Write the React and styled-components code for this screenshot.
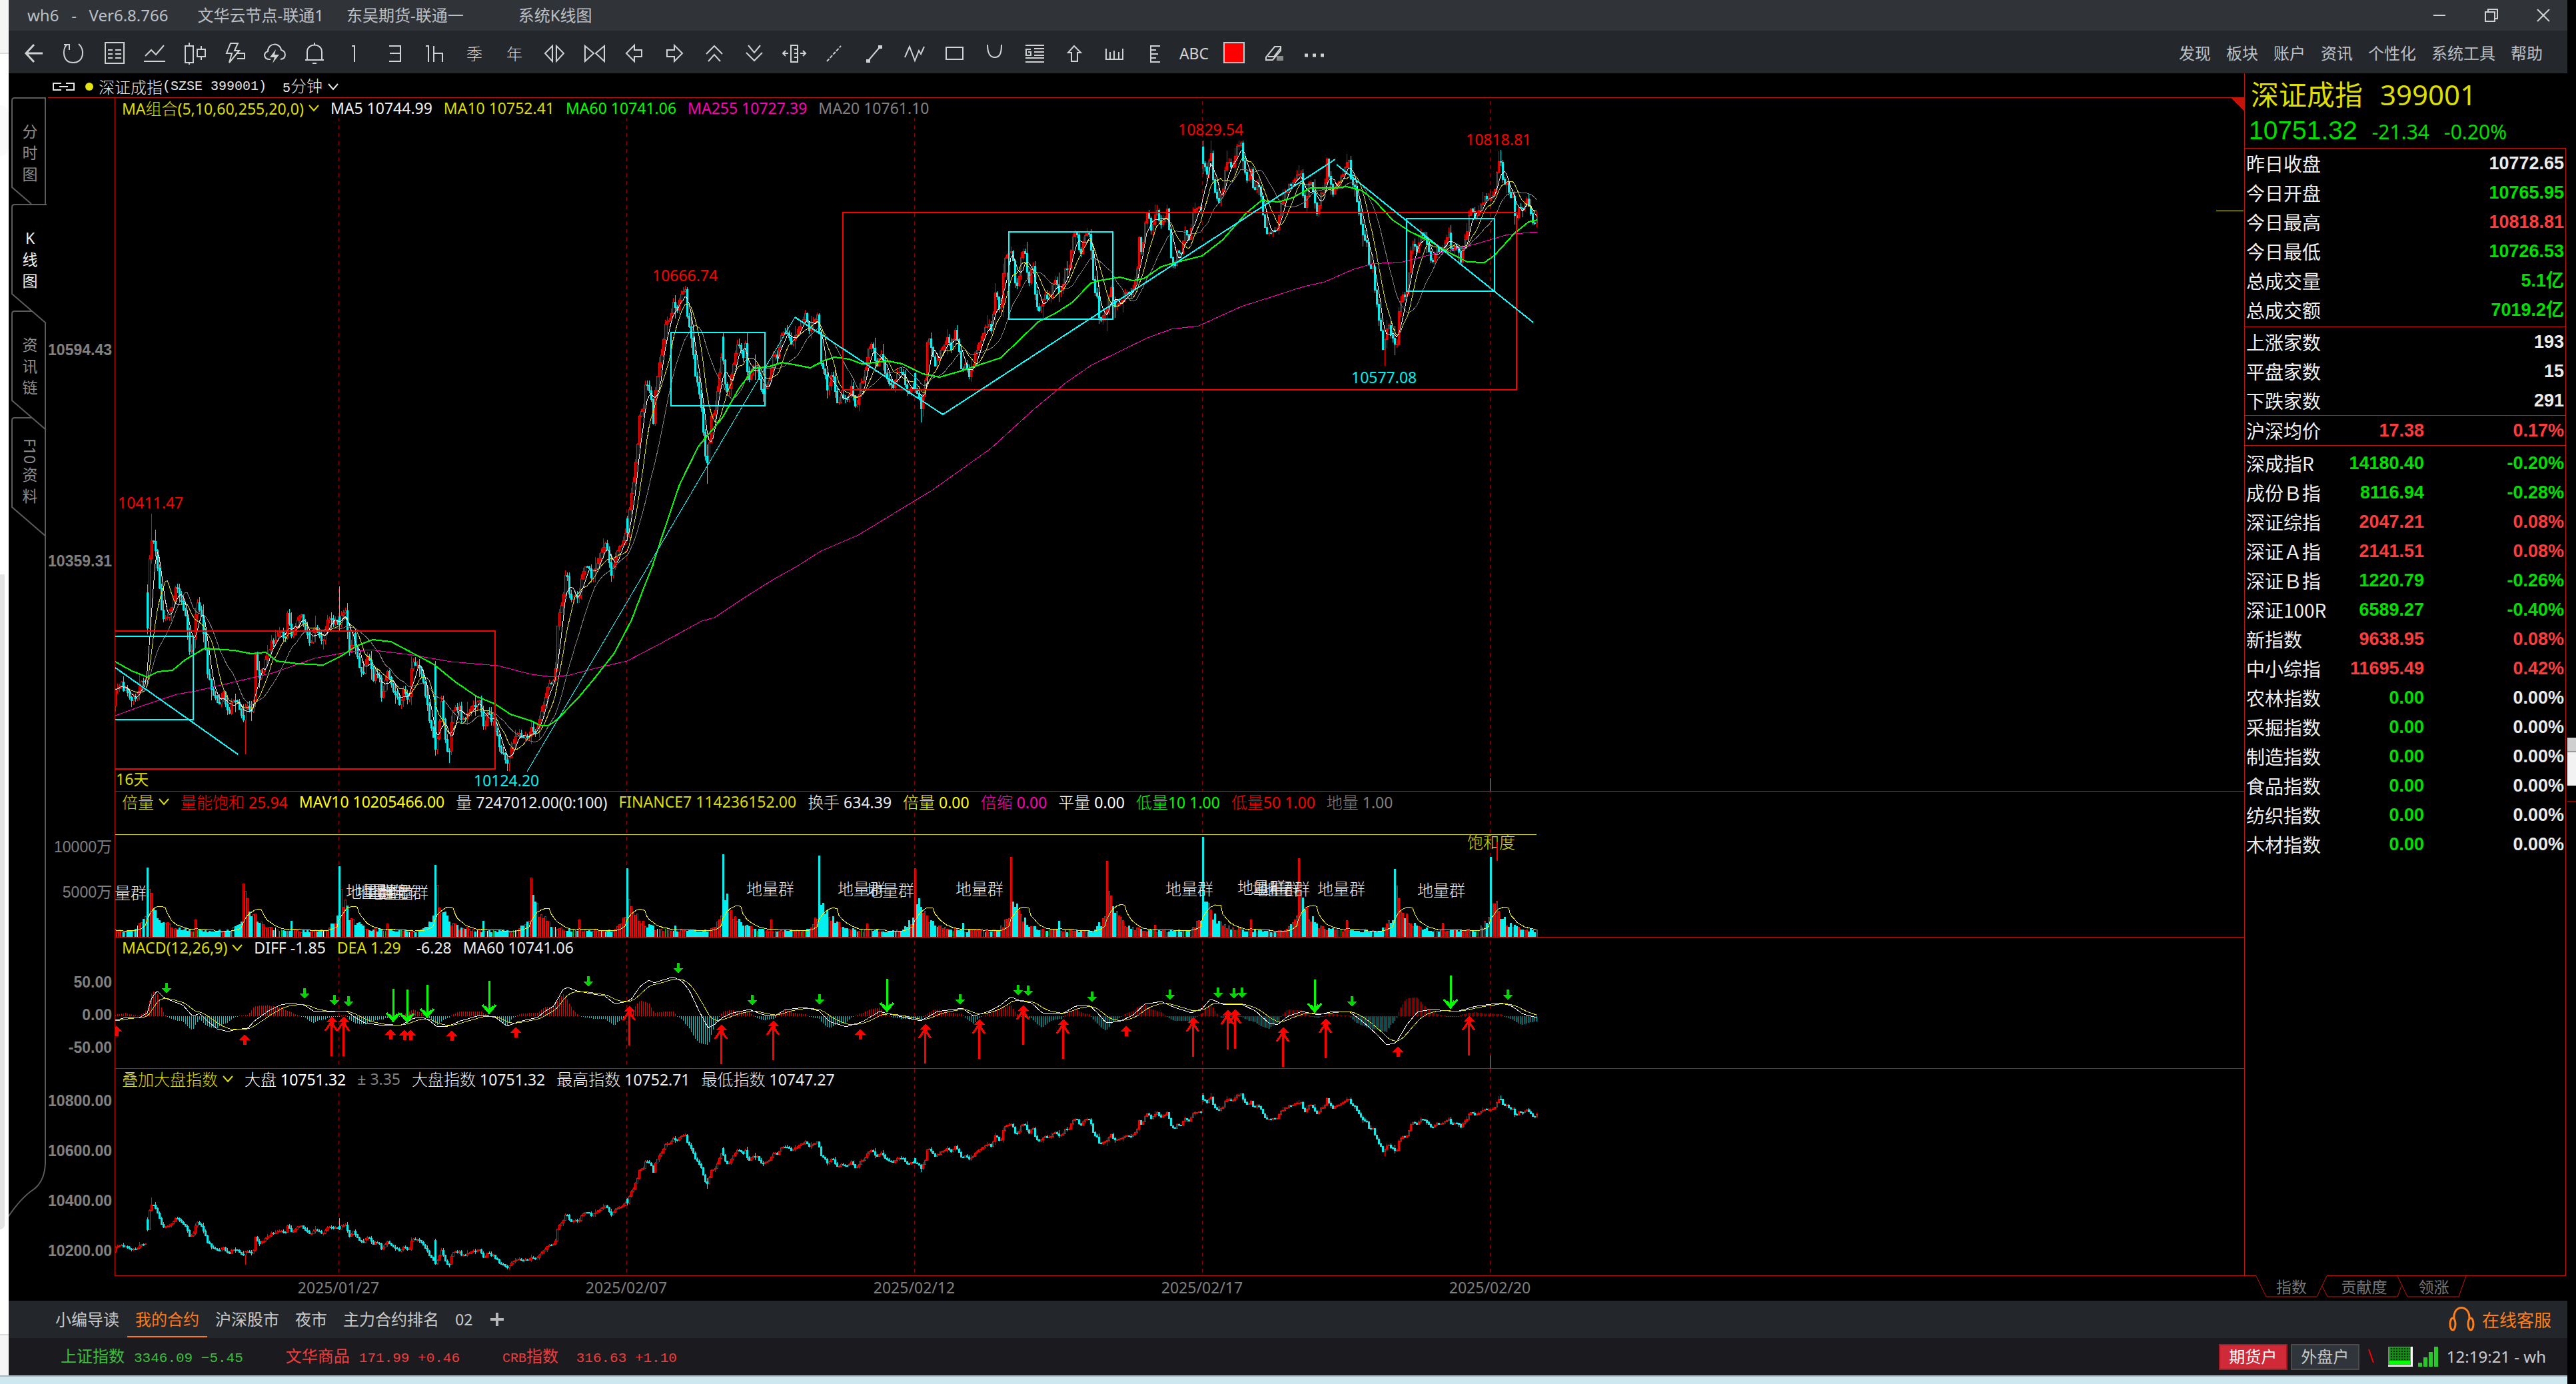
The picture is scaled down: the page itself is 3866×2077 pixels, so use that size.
import React from "react";
import styled, { createGlobalStyle } from "styled-components";

const RED = "#c4140a";
const GREEN = "#00e000";
const CYAN = "#00f0f0";
const YELLOW = "#dede00";
const SANS = '"Noto Sans", "Noto Sans CJK SC", sans-serif';

const Global = createGlobalStyle`
  * { box-sizing: border-box; }
  body { margin: 0; background: #000; font-family: ${SANS}; font-size: 23px; line-height: 32px; color: #e8e8e8; overflow: hidden; }
  button { font: inherit; color: inherit; background: none; border: 0; padding: 0; margin: 0; white-space: nowrap; }
  a { color: inherit; text-decoration: none; }
`;

/* ---------- shell ---------- */
const Desktop = styled.div`
  display: grid;
  grid-template-columns: 13px minmax(0, 1fr) 13px;
  grid-template-rows: minmax(0, 1fr) 13px;
  height: 100vh;
`;
const LeftEdge = styled.div`
  display: flex;
  flex-direction: column;
  background: #fff;
`;
const EdgeBlock = styled.div`
  flex: ${(p) => p.$grow} 1 0;
  width: ${(p) => p.$w || "100%"};
  background: ${(p) => p.$bg || "transparent"};
  border-radius: ${(p) => p.$r || 0};
  border-bottom: ${(p) => (p.$line ? `2px solid ${p.$line}` : 0)};
`;
const RightEdge = styled.div`
  grid-column: 3;
  grid-row: 1 / 3;
  display: flex;
  flex-direction: column;
  background: #000;
`;
const Taskbar = styled.div`
  grid-column: 1 / 3;
  background: #cfe7ee;
  border-top: 2px solid #a9b8bc;
`;
const Window = styled.div`
  display: grid;
  grid-template-rows: 46px 64px minmax(0, 1fr) 56px 56px;
  min-width: 0;
`;
const TitleBar = styled.header`
  display: flex;
  align-items: center;
  justify-content: space-between;
  background: #303338;
  color: #bcc0c5;
  padding: 0 24px 0 28px;
`;
const Titles = styled.div`
  display: flex;
  white-space: pre;
  font-size: 24px;
`;
const Title = styled.span`
  margin-right: ${(p) => p.$gap}px;
`;
const WindowButtons = styled.div`
  display: flex;
  gap: 54px;
`;
const IconButton = styled.button`
  display: grid;
  place-items: center;
  width: ${(p) => p.$w || 24}px;
  height: 46px;
  color: ${(p) => p.$color || "#d2d2d2"};
`;
const Line = styled.svg`
  display: block;
  fill: none;
  stroke: currentColor;
  stroke-width: 2;
  overflow: visible;
`;
const Toolbar = styled.nav`
  display: flex;
  align-items: center;
  justify-content: space-between;
  background: #24272b;
  padding: 4px 37px 0 9px;
`;
const Tools = styled.div`
  display: flex;
`;
const Menu = styled.div`
  display: flex;
  gap: 23px;
  font-size: 24px;
  color: #bcc0c5;
`;

/* ---------- chart side ---------- */
const Main = styled.main`
  display: flex;
  min-height: 0;
`;
const ChartSide = styled.section`
  flex: 1 1 0;
  min-width: 0;
  display: flex;
  flex-direction: column;
`;
const Symbol = styled.div`
  display: flex;
  align-items: center;
  height: 36px;
  padding: 4px 0 0 66px;
  font-size: 24px;
  font-family: "Noto Sans CJK SC", sans-serif;
  font-weight: 300;
  white-space: pre;
`;
const Mono = styled.span`
  font-family: "Liberation Mono", monospace;
  font-size: ${(p) => p.$size || 20}px;
`;
const Dot = styled.span`
  width: 12px;
  height: 12px;
  border-radius: 50%;
  background: #e4e410;
  margin: 0 8px 0 16px;
`;
const Period = styled.button`
  display: flex;
  align-items: center;
  gap: 8px;
  margin-left: 24px;
`;
const Body = styled.div`
  flex: 1;
  display: flex;
  min-height: 0;
`;
const ViewTabs = styled.div`
  width: 59px;
  display: flex;
  flex-direction: column;
`;
const ViewTab = styled.button`
  display: grid;
  height: 160px;
  color: ${(p) => (p.$active ? "#f0f0f0" : "#8c8c8c")};
`;
const TabShape = styled.svg`
  grid-area: 1 / 1;
  display: block;
  fill: none;
  stroke: ${(p) => p.$color || "#5c5c5c"};
  stroke-width: ${(p) => p.$sw || 2};
  overflow: visible;
`;
const ViewLabel = styled.span`
  grid-area: 1 / 1;
  display: flex;
  flex-direction: column;
  align-items: center;
  justify-content: center;
  padding: 6px 0 0 5px;
`;
const Turned = styled.span`
  writing-mode: vertical-rl;
  line-height: 24px;
`;
const TabRest = styled.div`
  flex: 1;
  min-height: 0;
  overflow: hidden;
`;
const Panels = styled.div`
  flex: 1;
  min-width: 0;
  display: flex;
  flex-direction: column;
`;
const Panel = styled.div`
  flex: ${(p) => p.$grow} 1 0;
  min-height: 0;
  display: grid;
  grid-template-columns: 100px minmax(0, 1fr);
`;
const Axis = styled.svg`
  display: block;
  width: 100%;
  height: 100%;
  border-top: ${(p) => (p.$ruled ? `1px solid ${RED}` : "1px solid #000")};
  font-family: "Liberation Sans", "Noto Sans CJK SC", sans-serif;
  font-weight: ${(p) => (p.$thin ? 400 : 700)};
  font-size: 23px;
  fill: #808080;
  text-anchor: end;
`;
const Plot = styled.div`
  display: grid;
  grid-template: minmax(0, 1fr) / minmax(0, 1fr);
  border-top: 1px solid ${RED};
  border-left: 1px solid ${RED};
`;
const Canvas = styled.svg`
  grid-area: 1 / 1;
  display: block;
  width: 100%;
  height: 100%;
  overflow: hidden;
  shape-rendering: crispEdges;
`;
const Legend = styled.div`
  grid-area: 1 / 1;
  justify-self: start;
  align-self: start;
  z-index: 1;
  display: flex;
  gap: 17px;
  height: 30px;
  line-height: 30px;
  padding-left: 10px;
  background: #000;
  white-space: pre;
`;
const LegendItem = styled.span`
  color: ${(p) => p.$c};
`;
const Han = styled.span`
  font-family: "Noto Sans CJK SC", sans-serif;
  font-size: 24px;
  font-weight: 300;
  line-height: 30px;
`;
const LegendName = styled.button`
  display: flex;
  align-items: center;
  gap: 7px;
  color: ${YELLOW};
`;
const Dates = styled.svg`
  display: block;
  width: 100%;
  height: 37px;
  fill: #808080;
  text-anchor: middle;
`;
const DateRow = styled.div`
  margin-left: 100px;
  border-top: 1px solid ${RED};
  height: 38px;
`;

/* ---------- quote side ---------- */
const Quote = styled.aside`
  width: 485px;
  padding-right: 2px;
  display: flex;
  flex-direction: column;
`;
const QuoteBox = styled.div`
  flex: 1;
  border: solid ${RED};
  border-width: 0 1px;
`;
const QuoteHead = styled.div`
  height: 112px;
  margin-right: -3px;
  background: #000;
`;
const QuoteName = styled.h1`
  margin: 0;
  padding: 2px 0 0 9px;
  font-size: 42px;
  font-weight: 400;
  line-height: 60px;
  color: ${YELLOW};
  display: flex;
  gap: 26px;
`;
const QuotePrice = styled.div`
  display: flex;
  align-items: baseline;
  gap: 22px;
  padding: 2px 0 0 6px;
  font-size: 30px;
  line-height: 44px;
  color: ${GREEN};
`;
const Last = styled.span`
  font-family: "Liberation Sans", sans-serif;
  font-size: 39px;
`;
const Table = styled.table`
  width: 100%;
  table-layout: fixed;
  border-collapse: collapse;
`;
const Section = styled.div`
  border-top: 1px solid ${RED};
  padding: ${(p) => p.$pt || 0}px 2px ${(p) => p.$pb || 0}px;
`;
const Name = styled.th`
  width: ${(p) => (p.$wide ? "40%" : "25%")};
  height: 44px;
  padding: 0;
  text-align: left;
  font-weight: 400;
  font-size: 28px;
  line-height: 40px;
  font-family: "Noto Sans CJK SC", sans-serif;
  white-space: nowrap;
  overflow: visible;
  color: #eee;
`;
const Value = styled.td`
  width: ${(p) => p.$w || "auto"};
  padding: 0;
  text-align: right;
  font-family: "Liberation Sans", "Noto Sans CJK SC", sans-serif;
  font-weight: 700;
  font-size: 27px;
  color: ${(p) => p.$c};
`;
const QuoteTabs = styled.div`
  display: flex;
  height: 38px;
`;
const Ruled = styled.div`
  flex: ${(p) => (p.$fill ? "1" : "none")};
  width: 18px;
  border-top: 1px solid ${RED};
`;
const QuoteTab = styled.button`
  display: grid;
  grid-template: 34px / minmax(0, 1fr);
  width: ${(p) => p.$w}px;
  border-top: 1px solid ${(p) => (p.$open ? "#000" : RED)};
  color: #777;
`;
const QuoteTabLabel = styled.span`
  grid-area: 1 / 1;
  text-align: center;
`;

/* ---------- bottom bars ---------- */
const PageTabs = styled.nav`
  display: flex;
  justify-content: space-between;
  background: #23272b;
  padding: 0 24px 0 58px;
  font-family: "Noto Sans CJK SC", sans-serif;
  font-size: 24px;
`;
const Row = styled.div`
  display: flex;
  align-items: center;
`;
const PageTab = styled.button`
  height: 54px;
  padding: 0 12px;
  color: ${(p) => (p.$active ? "#ff7a1a" : "#c8c8c8")};
  border-bottom: 2px solid ${(p) => (p.$active ? "#ff7a1a" : "transparent")};
`;
const AddTab = styled.button`
  display: grid;
  place-items: center;
  width: 48px;
  height: 54px;
  color: #b8b8b8;
`;
const Service = styled.a`
  display: flex;
  align-items: center;
  gap: 12px;
  color: #ff7f1a;
  font-size: 26px;
`;
const StatusBar = styled.footer`
  display: flex;
  align-items: center;
  justify-content: space-between;
  background: #1a1a1f;
  padding: 0 32px 0 78px;
`;
const Indices = styled.div`
  display: flex;
  gap: 64px;
`;
const Index = styled.span`
  display: flex;
  align-items: baseline;
  gap: 14px;
  font-family: "Noto Sans CJK SC", sans-serif;
  font-size: 24px;
  color: ${(p) => (p.$up ? "#f03c3c" : "#3cbe3c")};
  white-space: pre;
`;
const Account = styled.button`
  width: 103px;
  height: 39px;
  margin-right: 5px;
  font-size: 24px;
  color: ${(p) => (p.$on ? "#fff" : "#c8c8c8")};
  background: ${(p) => (p.$on ? "#d02a38" : "#30353b")};
  border: 2px solid ${(p) => (p.$on ? "#9c1f24" : "#4b4b4b")};
  line-height: 32px;
`;
const Spinner = styled.svg`
  display: block;
  margin: 0 21px 0 8px;
`;
const Clock = styled.span`
  margin-left: 13px;
  color: #c8ccd0;
  font-size: 24px;
`;
const StatusIcons = styled.div`
  display: flex;
  gap: 8px;
`;

/* ---------- series ---------- */
const FIRST = 173;
const STEP = 3;
const COUNT = 712;

// Closing level along the time axis, as x, y pairs.
const CLOSE = [
  173,1033,182,1027,189,1037,198,1048,205,1043,211,1020,218,1017,221,943,224,840,228,800,233,830,238,867,242,917,248,930,256,913,264,880,272,900,279,930,284,977,289,973,295,900,302,927,307,967,311,1013,319,1037,329,1057,334,1037,342,1073,349,1047,358,1060,365,1083,370,1053,376,1077,380,1053,383,983,388,1020,393,1010,399,987,407,963,415,960,423,943,427,967,431,920,438,957,445,930,451,917,457,940,466,970,472,943,484,960,493,927,501,933,509,933,517,910,522,960,525,980,530,947,536,987,543,1017,552,983,560,1017,568,1010,573,1050,581,1007,590,1040,600,1057,605,1037,613,1053,618,993,627,997,635,1023,643,1073,653,1123,657,1103,662,1053,668,1107,673,1137,678,1070,688,1060,694,1083,705,1063,719,1050,726,1097,731,1070,740,1083,748,1113,756,1137,763,1147,767,1120,775,1097,784,1110,791,1107,798,1093,805,1097,814,1060,822,1027,828,1030,833,1000,837,920,844,907,849,847,855,903,862,887,868,900,874,857,881,847,887,863,893,857,901,827,910,817,918,867,924,830,933,813,941,797,948,730,951,717,955,677,960,613,964,623,969,570,976,593,980,633,984,570,989,547,994,520,999,483,1005,477,1011,447,1015,470,1021,443,1028,437,1032,487,1036,493,1039,527,1043,563,1048,580,1053,617,1058,687,1062,700,1066,627,1072,620,1079,563,1084,523,1088,580,1093,587,1098,557,1102,527,1110,513,1114,540,1118,517,1122,570,1130,550,1136,550,1141,583,1147,588,1154,570,1160,533,1166,533,1173,500,1181,503,1188,517,1196,500,1202,487,1209,463,1214,500,1221,480,1228,473,1231,540,1237,557,1242,593,1248,560,1252,577,1257,607,1263,590,1270,600,1277,580,1284,617,1290,580,1295,570,1301,537,1308,510,1316,553,1322,527,1330,570,1339,580,1346,560,1354,553,1362,593,1372,577,1377,590,1382,613,1387,583,1392,500,1397,523,1404,550,1410,530,1421,507,1428,523,1432,493,1438,517,1443,563,1448,550,1455,563,1464,530,1471,513,1482,483,1487,493,1494,433,1501,477,1506,393,1512,377,1519,383,1525,440,1532,387,1537,367,1543,430,1549,387,1554,457,1560,473,1566,443,1574,447,1583,420,1591,443,1598,407,1605,397,1610,353,1615,347,1621,383,1628,350,1633,343,1637,377,1641,430,1646,443,1650,483,1655,473,1661,467,1666,423,1671,457,1681,460,1689,433,1697,440,1705,413,1710,347,1713,387,1718,337,1722,310,1728,353,1734,313,1743,337,1752,313,1756,380,1762,403,1767,373,1772,383,1778,347,1785,360,1790,323,1795,310,1802,317,1805,243,1809,247,1812,263,1816,213,1820,267,1824,297,1829,303,1834,290,1837,257,1842,240,1850,253,1855,223,1862,213,1866,247,1872,280,1877,253,1882,293,1887,270,1892,290,1896,330,1902,353,1909,343,1917,343,1921,310,1928,293,1934,280,1942,267,1952,263,1957,313,1965,273,1970,283,1975,320,1982,293,1987,290,1990,230,1994,263,2000,287,2008,273,2016,257,2023,237,2028,273,2034,283,2039,323,2045,350,2052,370,2056,417,2059,387,2064,443,2069,477,2076,527,2082,483,2087,503,2092,503,2095,530,2099,470,2105,440,2112,443,2115,387,2121,360,2126,380,2133,343,2141,370,2148,397,2155,373,2161,377,2168,363,2174,347,2179,383,2184,363,2192,390,2198,363,2206,310,2212,327,2220,317,2228,293,2235,297,2242,293,2247,253,2251,230,2256,277,2261,273,2266,297,2271,293,2274,343,2280,303,2285,317,2291,297,2296,320,2302,340,2307,317,
];
const MA60 = [
  173,993,198,1007,221,1016,237,1008,259,1006,278,990,307,973,351,976,377,981,399,979,415,992,447,996,485,998,511,985,536,969,559,960,587,963,619,980,651,997,683,1023,715,1045,744,1057,766,1072,798,1082,811,1089,823,1089,836,1080,868,1047,893,1017,922,980,948,930,967,880,979,850,992,810,1020,727,1048,670,1084,627,1109,583,1132,553,1155,550,1173,544,1191,547,1216,552,1237,541,1252,536,1275,539,1293,546,1334,542,1354,546,1385,561,1410,566,1441,557,1471,547,1502,537,1530,510,1558,483,1584,470,1609,454,1637,425,1650,421,1681,416,1700,421,1717,418,1743,400,1768,393,1804,384,1835,360,1870,320,1893,301,1919,303,1939,297,1967,282,2003,282,2021,280,2044,286,2064,302,2090,330,2115,347,2146,362,2171,377,2202,393,2228,394,2243,383,2273,350,2294,333,2307,330,
];
const MA255 = [
  173,1074,217,1058,265,1042,294,1037,358,1022,409,1010,472,988,514,980,555,975,619,983,677,993,747,999,798,1012,830,1016,855,1013,893,1003,941,992,989,967,1053,932,1072,927,1117,897,1160,870,1196,850,1232,827,1288,803,1400,735,1487,673,1553,613,1600,574,1638,548,1722,507,1758,494,1799,489,1863,460,1957,430,1988,423,2029,405,2059,396,2105,393,2156,380,2212,367,2263,352,2307,348,
];
const DIFF = [
  173,1531,189,1527,210,1527,221,1520,228,1497,236,1487,246,1497,260,1503,274,1508,289,1525,300,1521,312,1533,326,1544,342,1548,354,1545,372,1543,382,1532,403,1517,421,1508,435,1506,456,1508,470,1517,488,1519,519,1517,533,1527,547,1535,575,1539,603,1538,621,1528,635,1527,645,1532,656,1541,673,1540,691,1532,723,1523,744,1527,761,1540,779,1533,807,1527,817,1518,831,1510,845,1485,852,1482,866,1487,891,1492,908,1495,922,1506,937,1504,947,1500,961,1480,974,1471,982,1475,1010,1466,1024,1473,1035,1487,1049,1517,1063,1543,1073,1537,1084,1527,1100,1520,1125,1515,1146,1523,1162,1525,1179,1515,1208,1512,1229,1517,1245,1533,1270,1541,1295,1533,1320,1518,1340,1523,1382,1532,1407,1518,1444,1513,1461,1525,1486,1517,1502,1508,1517,1496,1531,1502,1548,1505,1564,1520,1593,1522,1614,1510,1635,1509,1647,1520,1660,1535,1680,1533,1701,1523,1718,1507,1743,1503,1763,1512,1788,1520,1805,1513,1817,1499,1834,1507,1863,1507,1884,1517,1904,1535,1917,1538,1933,1525,1954,1518,1979,1523,2000,1518,2025,1518,2045,1533,2066,1552,2081,1568,2095,1565,2112,1537,2128,1518,2149,1515,2186,1518,2215,1510,2253,1505,2269,1510,2286,1522,2306,1527,
];

const noise = (n) => {
  const s = Math.sin(n * 127.1 + 11.7) * 43758.5453;
  return s - Math.floor(s);
};
const sample = (pairs) => {
  const out = [];
  let k = 0;
  for (let i = 0; i < COUNT; i++) {
    const x = FIRST + i * STEP;
    while (k < pairs.length - 4 && pairs[k + 2] < x) k += 2;
    const t = Math.min(1, Math.max(0, (x - pairs[k]) / (pairs[k + 2] - pairs[k])));
    out.push(pairs[k + 1] + (pairs[k + 3] - pairs[k + 1]) * t);
  }
  return out;
};
const polyline = (ys) => ys.map((y, i) => `${i ? "L" : "M"}${FIRST + i * STEP} ${y.toFixed(1)}`).join("");
const pairPath = (p) => {
  let d = "";
  for (let i = 0; i < p.length; i += 2) d += `${i ? "L" : "M"}${p[i]} ${p[i + 1]}`;
  return d;
};
const average = (ys, n) =>
  ys.map((_, i) => {
    const part = ys.slice(Math.max(0, i - n + 1), i + 1);
    return part.reduce((a, b) => a + b, 0) / part.length;
  });

const closes = sample(CLOSE).map((y, i) => Math.min(1152, Math.max(214, y + (noise(i) - 0.5) * 9)));
const OPENS = { 221: 889, 509: 925, 653: 1000, 941: 778, 1085: 505, 1373: 560, 1805: 220, 2237: 300 };
const HIGHS = { 227: 771, 509: 880, 1028: 429, 1817: 211, 2252: 225, 1085: 500 };
const LOWS = { 368: 1132, 764: 1157, 2078: 549, 1061: 726, 1661: 497, 1382: 634, 674: 1145 };
const candles = closes.map((close, i) => {
  const x = FIRST + i * STEP;
  const open = OPENS[x] || (i ? closes[i - 1] : close + 24);
  const top = Math.min(open, close);
  const bottom = Math.max(open, close);
  const reach = i % 4 === 0 ? 18 : 8;
  return {
    x,
    up: close < open,
    top,
    bottom,
    high: HIGHS[x] || Math.max(211, top - noise(i + 900) * reach),
    low: LOWS[x] || Math.min(1157, bottom + noise(i + 1900) * reach),
  };
});

const candlePaths = (map) => {
  let up = "";
  let down = "";
  let upWick = "";
  let downWick = "";
  candles.forEach((c) => {
    const top = Math.round(map(c.top));
    const h = Math.max(1, Math.round(map(c.bottom)) - top);
    const hi = Math.round(map(c.high));
    const lo = Math.round(map(c.low));
    if (c.up) {
      up += `M${c.x - 0.5} ${top + 0.5}h2v${h}h-2z`;
      upWick += `M${c.x + 0.5} ${hi}V${top}M${c.x + 0.5} ${top + h}V${lo}`;
    } else {
      down += `M${c.x - 1} ${top}h3v${h + 1}h-3z`;
      downWick += `M${c.x + 0.5} ${hi}V${lo}`;
    }
  });
  return { up, down, upWick, downWick };
};
const priceCandles = candlePaths((y) => y);
const marketCandles = candlePaths((y) => 1905 - (1157 - y) * 0.2796);

const OPENING_VOLUME = [104, 80, 106, 108, 89, 103, 124, 122, 103, 120, 114, 150, 118, 102, 120];
const RED_OPENINGS = [1, 4, 8, 9, 10, 12];
const volumes = closes.map((_, i) => {
  const bar = (i + 32) % 48;
  const day = Math.floor((i - 16) / 48);
  if (bar === 0) return OPENING_VOLUME[day];
  const decay = i < 16 ? 0 : 54 * Math.exp(-(bar - 1) / 5);
  const close = bar > 41 ? (bar - 41) * 3 : 0;
  const noon = bar % 24 === 0 ? 12 : 0;
  return Math.max(6, (9 + decay + close + noon) * (0.75 + noise(i + 77) * 0.5));
});
const volumeAverage = average(volumes, 10);
const bars = { cyan: "", red: "", green: "", white: "" };
volumes.forEach((v, i) => {
  const x = FIRST + i * STEP;
  const h = Math.round(v);
  const bar = (i + 32) % 48;
  const day = Math.floor((i - 16) / 48);
  const red = bar === 0 ? RED_OPENINGS.includes(day) : candles[i].up;
  const pick = noise(i + 5000);
  if (!red) bars.cyan += `M${x - 1} 1406h3v${-h}h-3z`;
  else if (h < 13 && pick > 0.8) bars.green += `M${x + 0.5} 1406v${-h}`;
  else if (h < 18 && pick < 0.1) bars.white += `M${x + 0.5} 1406v${-h}`;
  else bars.red += `M${x - 0.5} 1406v${-h}h2v${h}`;
});

const diff = sample(DIFF);
const dea = [];
diff.forEach((v, i) => dea.push(i ? dea[i - 1] + (v - dea[i - 1]) * 0.2 : v + 1));
const hist = { up: "", down: "" };
diff.forEach((v, i) => {
  const h = Math.round((v - dea[i]) * 2);
  hist[h < 0 ? "up" : "down"] += `M${FIRST + i * STEP + 0.5} 1525v${h || 1}`;
});

const DAYS = [508, 940, 1372, 1804, 2236];
const DATES = ["2025/01/27", "2025/02/07", "2025/02/12", "2025/02/17", "2025/02/20"];
const SMALL_DOWN = [[250,1491],[457,1499],[502,1509],[523,1511],[883,1481],[1018,1461],[1129,1509],[1230,1508],[1441,1508],[1528,1494],[1543,1495],[1639,1504],[1756,1501],[1828,1498],[1852,1499],[1864,1498],[2029,1511],[2263,1501]];
const BIG_DOWN = [[590,1535],[611,1536],[641,1529],[734,1523],[1331,1520],[1973,1521],[2177,1515]];
const SMALL_UP = [[175,1539],[367,1552],[586,1544],[607,1545],[616,1545],[678,1546],[774,1541],[1291,1544],[1690,1539],[2098,1570]];
const BIG_UP = [[498,1525],[516,1525],[945,1509],[1083,1537],[1161,1531],[1389,1536],[1470,1529],[1536,1508],[1596,1529],[1791,1526],[1843,1515],[1854,1514],[1926,1541],[1990,1528],[2205,1524]];
const GROUPS = [[148,1351],[519,1349],[534,1349],[552,1350],[571,1350],[1120,1345],[1257,1345],[1300,1347],[1434,1345],[1749,1345],[1857,1343],[1879,1345],[1894,1345],[1977,1345],[2127,1347]];

/* ---------- small parts ---------- */
const Chevron = () => (
  <Line width="16" height="12" viewBox="0 0 16 12"><path d="M1 2l7 8 7-8" /></Line>
);
// Chinese runs are set one size larger than the figures beside them.
const Mixed = ({ text }) =>
  text.split(/([\u4e00-\u9fff]+)/).map((run, i) => (i % 2 ? <Han key={i}>{run}</Han> : run));
const Grid = () => (
  <g stroke="#8c0000" strokeDasharray="6 6">
    {DAYS.map((x) => <path key={x} d={`M${x + 0.5} 140V1914`} />)}
  </g>
);
const Candles = ({ set }) => (
  <>
    <path d={set.upWick} stroke="#ff0000" fill="none" />
    <path d={set.downWick} stroke={CYAN} fill="none" />
    <path d={set.up} stroke="#ff0000" fill="#000" />
    <path d={set.down} fill={CYAN} />
  </>
);
const Indicator = ({ grow, top, ruled, thin, ticks, name, items, children }) => (
  <Panel $grow={grow}>
    <Axis $ruled={ruled} $thin={thin}>
      {ticks.map(([label, y]) => <text key={label} x="96" y={y - top - 1}>{label}</text>)}
    </Axis>
    <Plot>
      <Canvas><g transform={`translate(-173 ${-top - 1})`}>{children}</g></Canvas>
      <Legend>
        <LegendName><span><Mixed text={name} /></span><Chevron /></LegendName>
        {items.map(([text, color]) => <LegendItem key={text} $c={color}><Mixed text={text} /></LegendItem>)}
      </Legend>
    </Plot>
  </Panel>
);

const TOOLS = [
  ["返回", <path d="M30 18H6M17 5L5 18l12 13" strokeWidth="3" />],
  ["刷新", <path d="M8 5c-7 8-6 27 10 27S36 12 26 4M4 5h8v8" transform="translate(-2 0)" />],
  ["报价", <path d="M4 2h28v31H4zM8 13h7m4 0h9M8 19h7m4 0h9M8 25h7m4 0h9" />],
  ["分时", <path d="M4 22l9-9 7 7L32 6M2 30h32" />],
  ["K线", <path d="M4 7h12v25H4zM10 2v5m0 25v3M22 12h12v11H22zM28 7v5m0 11v5" />],
  ["闪电", <path d="M12 3h11l-5 11h7L10 32l4-14H6zM20 18h13v8H22" />],
  ["云", <><path d="M12 27C2 28 0 17 8 15 8 2 26 1 28 13c8 2 8 13-1 14" /><path d="M20 12l-9 12h7l-3 9 10-13h-7z" fill="currentColor" stroke="none" /></>],
  ["预警", <path d="M7 28V16C7 2 29 2 29 16v12M4 28h28M15 33h6M18 2v3" />],
  ["1分钟", <path d="M14 7h4v24" />],
  ["3分钟", <path d="M10 7h17v23H10M11 18h16" />],
  ["1小时", <path d="M5 7h4v24M17 7v24M17 18h13v13" />],
  ["季", null, "季"],
  ["年", null, "年"],
  ["拉开", <path d="M15 7L4 18l11 12zM21 7l11 11-11 12z" />],
  ["压缩", <path d="M4 7l13 11L4 30zM33 7L20 18l13 12z" />],
  ["左移", <path d="M18 6L6 18l12 12v-7h11V13H18z" />],
  ["右移", <path d="M18 6l12 12-12 12v-7H7V13h11z" />],
  ["放大", <path d="M6 19L18 7l12 12M9 30l9-10 9 10" />],
  ["缩小", <path d="M6 17l12 12 12-12M9 6l9 11 9-11" />],
  ["区间", <path d="M13 6h10v25H13zM23 12h-5m5 6h-5m5 6h-5M9 18H1m4-4l-4 4 4 4M27 18h8m-4-4l4 4-4 4" />],
  ["直线", <path d="M7 30L28 7" strokeDasharray="5 2" />],
  ["线段", <><path d="M9 29L27 8" /><path d="M6 27h6v5H6zM24 6h6v5h-6z" fill="currentColor" stroke="none" /></>],
  ["折线", <path d="M4 24l7-16 8 21 6-15 3 5 5-11" />],
  ["矩形", <path d="M6 9h25v18H6z" />],
  ["弧线", <path d="M8 5c0 12 3 19 11 19S29 17 29 5" />],
  ["黄金分割", <path d="M5 6h28M18 11h15M18 16h15M18 21h15M5 25h28M5 31h28M13 12H6v9h7v-5H9" />],
  ["箭头", <path d="M18 7l-9 10h5v13h9V17h5z" />],
  ["周期线", <path d="M6 11v16h25V11M12 16v11M18 14v13M25 16v11" />],
  ["百分比", <path d="M27 7H13v24h14M13 13h8M13 19h11M13 25h8" />],
  ["文字", null, "ABC"],
  ["颜色", <path d="M3 2h30v30H3z" fill="#ff0000" stroke="#c8c8c8" />],
  ["橡皮", <><path d="M6 24L19 8h9v6L16 28H6zM9 23h9L28 10" /><path d="M22 22h10v7H22z" fill="#888" stroke="none" /></>],
  ["更多", <path d="M4 18h5m7 0h5m7 0h5" strokeWidth="5" transform="translate(0 3)" />],
];
const MENU = ["发现", "板块", "账户", "资讯", "个性化", "系统工具", "帮助"];

const W = "#ececec";
const R = "#ff3c3c";
const G = GREEN;
const SUMMARY = [
  ["昨日收盘", "10772.65", W], ["今日开盘", "10765.95", G], ["今日最高", "10818.81", R],
  ["今日最低", "10726.53", G], ["总成交量", "5.1亿", G], ["总成交额", "7019.2亿", G],
];
const BREADTH = [["上涨家数", "193", W], ["平盘家数", "15", W], ["下跌家数", "291", W]];
const AVERAGE = [["沪深均价", "17.38", "0.17%", R, R]];
const INDEXES = [
  ["深成指R", "14180.40", "-0.20%", G, G], ["成份Ｂ指", "8116.94", "-0.28%", G, G],
  ["深证综指", "2047.21", "0.08%", R, R], ["深证Ａ指", "2141.51", "0.08%", R, R],
  ["深证Ｂ指", "1220.79", "-0.26%", G, G], ["深证100R", "6589.27", "-0.40%", G, G],
  ["新指数", "9638.95", "0.08%", R, R], ["中小综指", "11695.49", "0.42%", R, R],
  ["农林指数", "0.00", "0.00%", G, W], ["采掘指数", "0.00", "0.00%", G, W],
  ["制造指数", "0.00", "0.00%", G, W], ["食品指数", "0.00", "0.00%", G, W],
  ["纺织指数", "0.00", "0.00%", G, W], ["木材指数", "0.00", "0.00%", G, W],
];
const PairTable = ({ rows }) => (
  <Table><tbody>
    {rows.map(([n, v, c]) => <tr key={n}><Name scope="row" $wide>{n}</Name><Value $c={c}>{v}</Value></tr>)}
  </tbody></Table>
);
const IndexTable = ({ rows }) => (
  <Table><tbody>
    {rows.map(([n, v, p, c, pc]) => (
      <tr key={n}><Name scope="row">{n}</Name><Value $w="31%" $c={c}>{v}</Value><Value $c={pc}>{p}</Value></tr>
    ))}
  </tbody></Table>
);

export default function App() {
  return (
    <>
      <Global />
      <Desktop>
        <LeftEdge>
          <EdgeBlock $grow={79} $bg="#f5f5f5" $line="#dcdcdc" />
          <EdgeBlock $grow={77} />
          <EdgeBlock $grow={76} $bg="#fafafa" $r="0 12px 12px 0" />
          <EdgeBlock $grow={630} />
          <EdgeBlock $grow={985} $w="7px" $bg="#e4e4e4" $r="0 0 7px 0" />
          <EdgeBlock $grow={157} $line="#dcdcdc" />
          <EdgeBlock $grow={60} $bg="#f5f5f5" />
        </LeftEdge>
        <Window>
          <TitleBar>
            <Titles>
              <Title $gap={44}>{"wh6   -   Ver6.8.766"}</Title>
              <Title $gap={34}>文华云节点-联通1</Title>
              <Title $gap={82}>东吴期货-联通一</Title>
              <Title $gap={0}>系统K线图</Title>
            </Titles>
            <WindowButtons>
              <IconButton aria-label="最小化"><Line width="20" height="20"><path d="M1 10h18" /></Line></IconButton>
              <IconButton aria-label="还原"><Line width="20" height="20"><path d="M1 5h14v14H1zM5 5V1h14v14h-4" /></Line></IconButton>
              <IconButton aria-label="关闭"><Line width="20" height="20"><path d="M1 1l18 18M19 1L1 19" /></Line></IconButton>
            </WindowButtons>
          </TitleBar>
          <Toolbar>
            <Tools>
              {TOOLS.map(([label, art, text]) => (
                <IconButton key={label} aria-label={label} $w={60}>
                  {art ? <Line width="36" height="36" viewBox="0 0 36 36">{art}</Line> : <Mixed text={text} />}
                </IconButton>
              ))}
            </Tools>
            <Menu>{MENU.map((m) => <button key={m}>{m}</button>)}</Menu>
          </Toolbar>

          <Main>
            <ChartSide>
              <Symbol>
                <Line width="33" height="12" viewBox="0 0 33 12"><path d="M13 1H1v10h12M20 1h12v10H20M10 6h13" /></Line>
                <Dot />
                深证成指<Mono>(SZSE 399001)</Mono>
                <Period><span><Mono>5</Mono>分钟</span><Chevron /></Period>
              </Symbol>
              <Body>
                <ViewTabs>
                  <ViewTab>
                    <TabShape width="59" height="160"><path d="M56 1H9q-4 0-4 4V135L34 160M55 0V160" /></TabShape>
                    <ViewLabel><span>分</span><span>时</span><span>图</span></ViewLabel>
                  </ViewTab>
                  <ViewTab $active>
                    <TabShape width="59" height="160"><path d="M57 1H9q-4 0-4 4V135L56 179" /></TabShape>
                    <ViewLabel><span>K</span><span>线</span><span>图</span></ViewLabel>
                  </ViewTab>
                  <ViewTab>
                    <TabShape width="59" height="160"><path d="M35 1H9q-4 0-4 4V135L56 179M55 18V160" /></TabShape>
                    <ViewLabel><span>资</span><span>讯</span><span>链</span></ViewLabel>
                  </ViewTab>
                  <ViewTab>
                    <TabShape width="59" height="160"><path d="M35 1H9q-4 0-4 4V135L56 179M55 0V160" /></TabShape>
                    <ViewLabel><Turned>F10</Turned><span>资</span><span>料</span></ViewLabel>
                  </ViewTab>
                  <TabRest>
                    <TabShape width="59" height="1128"><path d="M55 0V960Q54 988 36 1000Q18 1012 -2 1042" /></TabShape>
                  </TabRest>
                </ViewTabs>
                <Panels>
                  <Indicator
                    grow={1041} top={146} ruled
                    ticks={[["10594.43", 533], ["10359.31", 850]]}
                    name="MA组合(5,10,60,255,20,0)"
                    items={[["MA5 10744.99", "#f0f0f0"], ["MA10 10752.41", YELLOW], ["MA60 10741.06", "#00ff00"], ["MA255 10727.39", "#ff00b4"], ["MA20 10761.10", "#808080"]]}
                  >
                    <Grid />
                    <path d="M2236.5 1168V1187" stroke="#888" />
                    <Candles set={priceCandles} />
                    <g fill="none">
                      <path d={polyline(average(closes, 20))} stroke="#808080" />
                      <path d={polyline(average(closes, 10))} stroke={YELLOW} />
                      <path d={polyline(average(closes, 5))} stroke="#f0f0f0" />
                      <path d={pairPath(MA255)} stroke="#ff00b4" />
                      <path d={pairPath(MA60)} stroke="#00ff00" strokeWidth="2" />
                      <g stroke="#ff0000" strokeWidth="2">
                        <path d="M170 947H743V1154H170" />
                        <path d="M1265 319H2276V585H1265z" />
                      </g>
                      <g stroke="#00ffff" strokeWidth="2">
                        <path d="M170 955H290V1080H170M173 1002L357 1132" />
                        <path d="M791 1158L1193 476" strokeWidth="1" />
                        <path d="M1193 476L1415 622L2004 239M2006 247L2301 484" />
                        <path d="M1007 499H1148V609H1007zM1514 348H1670V479H1514zM2111 328H2243V437H2111z" />
                      </g>
                    </g>
                    <g fontSize="23" fill="#ff0000">
                      <text x="177" y="763">10411.47</text>
                      <text x="979" y="422">10666.74</text>
                      <text x="1768" y="203">10829.54</text>
                      <text x="2200" y="218">10818.81</text>
                      <text x="2028" y="575" fill={CYAN}>10577.08</text>
                      <text x="711" y="1180" fill={CYAN}>10124.20</text>
                      <text x="174" y="1178" fill={YELLOW}>16天</text>
                    </g>
                    <svg x="100%" y="146" overflow="visible">
                      <g transform="translate(173 1)">
                        <path d="M-20 0H0V20z" fill={RED} />
                        <path d="M-42 169H-1" stroke={YELLOW} strokeWidth="1" />
                      </g>
                    </svg>
                  </Indicator>
                  <Indicator
                    grow={219} top={1187} thin
                    ticks={[["10000万", 1279], ["5000万", 1347]]}
                    name="倍量"
                    items={[["量能饱和 25.94", "#ff0000"], ["MAV10 10205466.00", "#ffff00"], ["量 7247012.00(0:100)", W], ["FINANCE7 114236152.00", YELLOW], ["换手 634.39", W], ["倍量 0.00", "#ffff00"], ["倍缩 0.00", "#ff00b4"], ["平量 0.00", "#ffffff"], ["低量10 1.00", "#00ff00"], ["低量50 1.00", "#ff0000"], ["地量 1.00", "#808080"]]}
                  >
                    <Grid />
                    <path d="M172 1252.5H2306" stroke={YELLOW} />
                    <path d={bars.red} stroke="#ff0000" fill="none" />
                    <path d={bars.green} stroke="#00c800" />
                    <path d={bars.white} stroke="#ffffff" />
                    <path d={bars.cyan} fill={CYAN} />
                    <path d={polyline(volumeAverage.map((v) => 1406 - v))} stroke="#ffff00" fill="none" />
                    <g fontSize="24" fontWeight="300" fontFamily="Noto Sans CJK SC, sans-serif" fill={W}>
                      {GROUPS.map(([x, y]) => <text key={x} x={x} y={y - 2}>地量群</text>)}
                      <text x="2202" y="1273" fill={YELLOW}>饱和度</text>
                    </g>
                    <path d="M2247 1264V1292" stroke="#ff0000" strokeWidth="2" />
                  </Indicator>
                  <Indicator
                    grow={197} top={1406}
                    ticks={[["50.00", 1482], ["0.00", 1531], ["-50.00", 1580]]}
                    name="MACD(12,26,9)"
                    items={[["DIFF -1.85", W], ["DEA 1.29", YELLOW], [" -6.28", W], ["MA60 10741.06", W]]}
                  >
                    <Grid />
                    <path d="M2236.5 1584V1603" stroke="#888" />
                    <path d={hist.up} stroke="#e80000" />
                    <path d={hist.down} stroke="#00d0d0" />
                    <path d={polyline(diff)} stroke="#f4f4f4" fill="none" />
                    <path d={polyline(dea)} stroke={YELLOW} fill="none" />
                    <g fill="#00d800">
                      {SMALL_DOWN.map(([x, y]) => <path key={x} d={`M${x} ${y}l-7-8h5v-8h4v8h5z`} />)}
                    </g>
                    <g fill="none" stroke="#00ff00" strokeWidth="3">
                      {BIG_DOWN.map(([x, y]) => <path key={x} d={`M${x} ${y - 51}V${y - 2}M${x - 10} ${y - 15}L${x} ${y - 3}l10-12M${x - 6} ${y - 13}L${x} ${y - 5}l6-8`} />)}
                    </g>
                    <g fill="#ff0000">
                      {[...SMALL_UP, ...BIG_UP].map(([x, y]) => <path key={x} d={`M${x} ${y}l8 9h-5v7h-5v-7h-6z`} />)}
                    </g>
                    <g fill="none" stroke="#ff0000" strokeWidth="3">
                      {BIG_UP.map(([x, y]) => <path key={x} d={`M${x - 1} ${y + 60}V${y + 8}M${x - 10} ${y + 22}L${x - 1} ${y + 9}l9 13`} />)}
                    </g>
                  </Indicator>
                  <Indicator
                    grow={311} top={1603}
                    ticks={[["10800.00", 1660], ["10600.00", 1735], ["10400.00", 1810], ["10200.00", 1885]]}
                    name="叠加大盘指数"
                    items={[["大盘 10751.32", "#fff"], ["± 3.35", "#808080"], ["大盘指数 10751.32", W], ["最高指数 10752.71", W], ["最低指数 10747.27", W]]}
                  >
                    <Grid />
                    <Candles set={marketCandles} />
                  </Indicator>
                  <DateRow>
                    <Dates>{DATES.map((d, i) => <text key={d} x={DAYS[i] - 172} y="26">{d}</text>)}</Dates>
                  </DateRow>
                </Panels>
              </Body>
            </ChartSide>

            <Quote>
              <QuoteBox>
                <QuoteHead>
                  <QuoteName><span>深证成指</span><span>399001</span></QuoteName>
                  <QuotePrice><Last>10751.32</Last><span>-21.34</span><span>-0.20%</span></QuotePrice>
                </QuoteHead>
                <Section $pb={3}><PairTable rows={SUMMARY} /></Section>
                <Section><PairTable rows={BREADTH} /></Section>
                <Section><IndexTable rows={AVERAGE} /></Section>
                <Section $pt={4}><IndexTable rows={INDEXES} /></Section>
              </QuoteBox>
              <QuoteTabs>
                <Ruled />
                <QuoteTab $w={106} $open>
                  <TabShape $color={RED} $sw={1} width="106" height="34"><path d="M0 0L15 31H91L106 0" /></TabShape>
                  <QuoteTabLabel>指数</QuoteTabLabel>
                </QuoteTab>
                <QuoteTab $w={112}>
                  <TabShape $color={RED} $sw={1} width="112" height="34"><path d="M-7 15L1 31H106L112 15" /></TabShape>
                  <QuoteTabLabel>贡献度</QuoteTabLabel>
                </QuoteTab>
                <QuoteTab $w={97}>
                  <TabShape $color={RED} $sw={1} width="97" height="34"><path d="M-6 0L9 31H86L97 0" /></TabShape>
                  <QuoteTabLabel>领涨</QuoteTabLabel>
                </QuoteTab>
                <Ruled $fill />
              </QuoteTabs>
            </Quote>
          </Main>

          <PageTabs>
            <Row>
              {["小编导读", "我的合约", "沪深股市", "夜市", "主力合约排名", "02"].map((t) => (
                <PageTab key={t} $active={t === "我的合约"}>{t}</PageTab>
              ))}
              <AddTab aria-label="添加"><Line width="20" height="20"><path d="M0 10h20M10 0v20" strokeWidth="4" /></Line></AddTab>
            </Row>
            <Service href="#service">
              <Line width="38" height="38" viewBox="0 0 38 38"><path d="M8 18C6-4 32-4 31 18" strokeWidth="3" /><ellipse cx="6" cy="26" rx="4" ry="9" strokeWidth="3" /><ellipse cx="33" cy="26" rx="4" ry="9" strokeWidth="3" /></Line>
              在线客服
            </Service>
          </PageTabs>
          <StatusBar>
            <Indices>
              <Index>上证指数<Mono $size={21}>3346.09 −5.45</Mono></Index>
              <Index $up>文华商品<Mono $size={21}>171.99 +0.46</Mono></Index>
              <Index $up><span><Mono $size={20}>CRB</Mono>指数</span><Mono $size={21}> 316.63 +1.10</Mono></Index>
            </Indices>
            <Row>
              <Account $on>期货户</Account>
              <Account>外盘户</Account>
              <Spinner width="9" height="26"><path d="M1 2l7 20" stroke="#ff0000" strokeWidth="2" /></Spinner>
              <StatusIcons>
                <svg width="37" height="30">
                  <path d="M0 0h37v30H0z" fill="#fff" />
                  <path d="M0 0h34v28H0z" fill="#808080" />
                  <path d="M2 1h31v20H2z" fill="#128c12" />
                  <path d="M4 3h29M4 7h29M4 11h29M4 15h29M4 19h29" stroke="#002800" strokeWidth="2" strokeDasharray="2 2" />
                  <path d="M2 21h31v6H2z" fill="#00ff00" />
                </svg>
                <svg width="30" height="30"><path d="M0 24h6v6H0zM8 16h6v14H8zM16 8h6v22h-6zM24 0h6v30h-6z" fill="#28c828" /></svg>
              </StatusIcons>
              <Clock>12:19:21 - wh</Clock>
            </Row>
          </StatusBar>
        </Window>
        <RightEdge>
          <EdgeBlock $grow={1109} />
          <EdgeBlock $grow={20} $bg="#cfcfcf" $line="#999" />
          <EdgeBlock $grow={50} $bg="#f2f2f2" />
          <EdgeBlock $grow={23} $line="#8c0000" />
          <EdgeBlock $grow={875} />
        </RightEdge>
        <Taskbar />
      </Desktop>
    </>
  );
}
